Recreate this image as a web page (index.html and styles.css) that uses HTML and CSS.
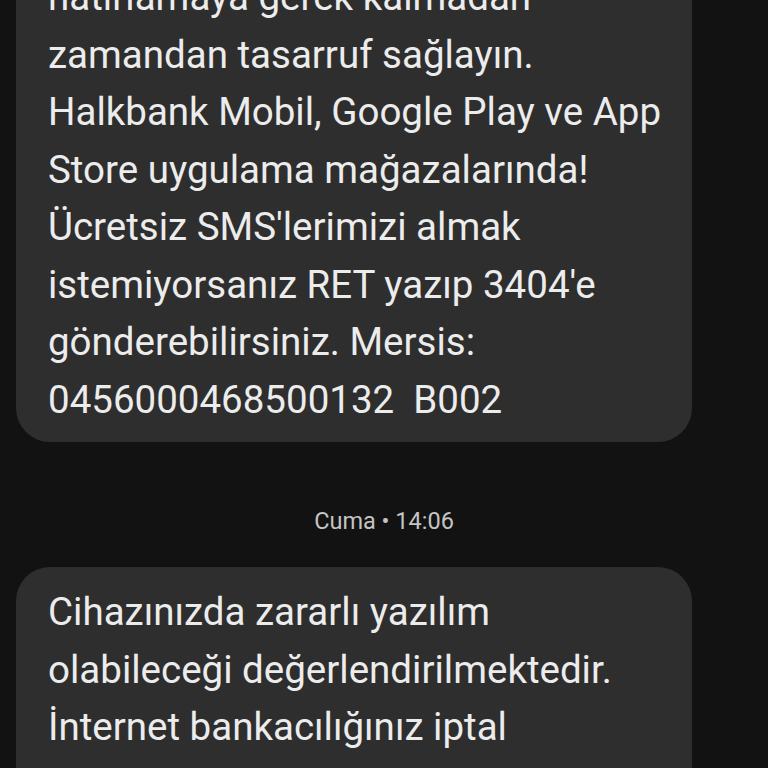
FILE: index.html
```html
<!DOCTYPE html>
<html lang="tr">
<head>
  <meta charset="UTF-8">
  <meta name="viewport" content="width=device-width, initial-scale=1.0">
  <title>Mesajlar</title>
  <link rel="stylesheet" href="styles.css">
</head>
<body>
  <div class="thread">
    <div class="bubble">
      <p>hatırlamaya gerek kalmadan<br>
      zamandan tasarruf sağlayın.<br>
      Halkbank Mobil, Google Play ve App<br>
      Store uygulama mağazalarında!<br>
      Ücretsiz SMS'lerimizi almak<br>
      istemiyorsanız RET yazıp 3404'e<br>
      gönderebilirsiniz. Mersis:<br>
      0456000468500132&nbsp; B002</p>
    </div>

    <div class="timestamp">Cuma • 14:06</div>

    <div class="bubble">
      <p>Cihazınızda zararlı yazılım<br>
      olabileceği değerlendirilmektedir.<br>
      İnternet bankacılığınız iptal<br>
      edilmiştir. Lütfen şubenize başvurun.</p>
    </div>
  </div>
</body>
</html>
```

FILE: styles.css
```css
body {
  margin: 0;
  padding: 0;
  background-color: #121212;
  font-family: Roboto, "Noto Sans", sans-serif;
  color: #ececec;
  overflow: hidden;
}

.thread {
  margin-top: -48px;
}

.bubble {
  margin: 0 76px 0 16px;
  background-color: #2e2e2e;
  border-radius: 34px;
  padding: 16px 24px 14px 32px;
}

.bubble p {
  margin: 0;
  font-size: 38.5px;
  line-height: 57.5px;
  white-space: nowrap;
}

.timestamp {
  margin: 67px 0 34px;
  text-align: center;
  font-size: 23.5px;
  line-height: 24px;
  color: #c4c4c4;
}
```
